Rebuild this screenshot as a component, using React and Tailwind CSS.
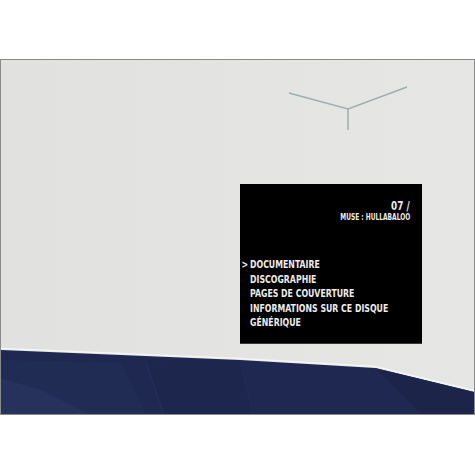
export default function App() {
  const font = { fontFamily: '"DejaVu Sans Condensed", "DejaVu Sans", sans-serif' };
  const items = ["DOCUMENTAIRE", "DISCOGRAPHIE", "PAGES DE COUVERTURE", "INFORMATIONS SUR CE DISQUE", "GÉNÉRIQUE"];
  return (
    <div className="w-[475px] h-[475px] bg-white overflow-hidden">
      <div className="relative mt-[59px] w-[475px] h-[356px] border border-[#8a8a8a] bg-[#e3e4e2] overflow-hidden">
        <svg className="absolute inset-0" width="473" height="354" viewBox="0 0 473 354">
          <defs>
            <linearGradient id="bgfade" x1="0" y1="0" x2="1" y2="0">
              <stop offset="0" stopColor="#e1e2e0" />
              <stop offset="1" stopColor="#e6e7e5" />
            </linearGradient>
          </defs>
          <rect x="0" y="0" width="473" height="354" fill="url(#bgfade)" />
          <polyline points="288,33 347,49 406,27" fill="none" stroke="#9cb0b1" strokeWidth="1.5" />
          <line x1="347" y1="49" x2="347" y2="70" stroke="#9cb0b1" strokeWidth="1.5" />
          <polyline points="-1,288.5 239,298.5 374,306.5 473,330.5" fill="none" stroke="#f4f5f4" strokeWidth="1.5" />
          <polygon points="-1,290 239,300 374,308 473,332 473,354 -1,354" fill="#1e2850" />
          <polygon points="-1,300 120,302 145,354 -1,354" fill="#212c55" />
          <polygon points="-1,318 40,330 88,354 -1,354" fill="#26315c" />
          <polygon points="145,301 239,300 252,354 165,354" fill="#1d274d" />
          <polygon points="374,308 473,332 473,354 420,354" fill="#1c2549" />
          <line x1="145" y1="302" x2="162" y2="354" stroke="#28325d" strokeWidth="0.8" />
          <line x1="239" y1="300" x2="252" y2="354" stroke="#25305a" strokeWidth="0.8" />
        </svg>
        <div className="relative ml-[239px] mt-[124px] w-[182px] h-[160px] bg-black border-b border-[#3a3a3a] text-[#ececec] font-bold overflow-hidden" style={font}>
          <div className="flex flex-col items-end pr-[12px] pt-[15px]">
            <div className="text-[12px] leading-[14px] whitespace-nowrap origin-right scale-x-[0.82]">07 /</div>
            <div className="text-[8px] leading-[10px] whitespace-nowrap origin-right scale-x-[0.82]">MUSE : HULLABALOO</div>
          </div>
          <div className="mt-[35px] flex flex-col text-[11px] leading-[14.5px]">
            {items.map((t, i) => (
              <div key={t} className="flex whitespace-nowrap">
                <span className="w-[10px] shrink-0 pl-[2px] inline-block origin-left scale-x-[0.8]">{i === 0 ? ">" : ""}</span>
                <span className="shrink-0 inline-block origin-left scale-x-[0.79]">{t}</span>
              </div>
            ))}
          </div>
        </div>
      </div>
    </div>
  );
}
